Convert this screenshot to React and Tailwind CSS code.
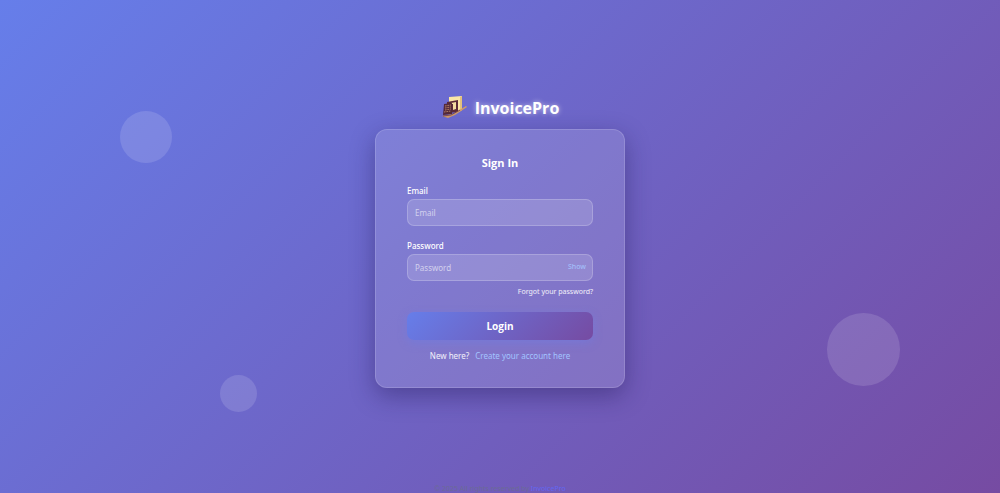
import { useState } from "react";

const inputClass =
  "h-[27px] w-full rounded-[7px] border border-white/20 bg-white/15 px-[7px] text-[8px] text-white placeholder-white/60 outline-none focus:border-white/60";

const Logo = () => (
  <svg viewBox="0 0 28 24" className="h-6 w-7" aria-hidden="true">
    <path d="M8 1 L21 0 L21 14 L18 16 L8 15Z" fill="#fbe6a6" />
    <path d="M19 1 L21 0 L21 14 L19 15Z" fill="#e3c27c" />
    <path d="M6 6 L17 4 L17 16 L6 17Z" fill="#5b2b38" />
    <path d="M10 7 L15 6 L15 13 L12 14 L12 8 L10 8Z" fill="#f3dca0" />
    <path d="M3 8 L11 7 L11 18 L2 19Z" fill="#54293a" />
    <path
      d="M4 10 L10 9 M4 12 L10 11 M4 14 L10 13 M3 16 L10 15"
      stroke="#c99469"
      strokeWidth="0.8"
      strokeDasharray="1.6 0.8"
    />
    <path d="M1 20 L12 18 L25 10 L26 11 L14 19 L7 22Z" fill="#cf9a68" />
    <path d="M2 20 L10 19 L19 14" stroke="#6b3a45" strokeWidth="0.8" fill="none" />
  </svg>
);

const Field = ({ id, label, children }) => (
  <div className="flex flex-col gap-[3px]">
    <label htmlFor={id} className="text-[8px] leading-[10px] font-medium">
      {label}
    </label>
    {children}
  </div>
);

const App = () => {
  const [email, setEmail] = useState("");
  const [password, setPassword] = useState("");
  const [showPassword, setShowPassword] = useState(false);

  const handleSubmit = (e) => {
    e.preventDefault();
  };

  return (
    <div className="relative flex h-screen flex-col overflow-hidden bg-linear-[135deg,#667eea_0%,#764ba2_100%] font-['Noto_Sans',sans-serif] text-white">
      {/* floating background circles */}
      <div className="absolute top-[22.5%] left-[12%] size-[52px] rounded-full bg-white/13" />
      <div className="absolute right-[10%] bottom-[21.7%] size-[73px] rounded-full bg-white/13" />
      <div className="absolute bottom-[16.5%] left-[22%] size-[37px] rounded-full bg-white/13" />

      <main className="relative flex flex-1 flex-col items-center justify-center">
        <div className="mb-2 flex items-center gap-[6px]">
          <Logo />
          <h1 className="font-['Open_Sans',sans-serif] text-[16px] leading-[26px] font-bold [text-shadow:0_0_5px_rgba(255,255,255,0.6)]">
            InvoicePro
          </h1>
        </div>

        <form
          onSubmit={handleSubmit}
          className="flex w-full max-w-[250px] flex-col rounded-xl border border-white/15 bg-white/13 px-[31px] py-[25px] shadow-[0_8px_24px_rgba(31,20,80,0.4)]"
        >
          <h2 className="mb-[15px] text-center font-['Open_Sans',sans-serif] text-[11px] leading-4 font-bold">
            Sign In
          </h2>

          <Field id="email" label="Email">
            <input
              id="email"
              type="email"
              placeholder="Email"
              value={email}
              onChange={(e) => setEmail(e.target.value)}
              className={inputClass}
            />
          </Field>

          <div className="mt-[15px]">
            <Field id="password" label="Password">
              <div className="relative flex">
                <input
                  id="password"
                  type={showPassword ? "text" : "password"}
                  placeholder="Password"
                  value={password}
                  onChange={(e) => setPassword(e.target.value)}
                  className={inputClass}
                />
                <button
                  type="button"
                  onClick={() => setShowPassword(!showPassword)}
                  className="absolute inset-y-0 right-[7px] cursor-pointer text-[7px] font-medium text-[#a3bffa]"
                >
                  {showPassword ? "Hide" : "Show"}
                </button>
              </div>
            </Field>
          </div>

          <a
            href="#forgot"
            className="mt-[6px] self-end text-[7px] leading-[10px] text-white/90 hover:underline"
          >
            Forgot your password?
          </a>

          <button
            type="submit"
            className="mt-[15px] h-7 cursor-pointer rounded-[7px] bg-linear-[135deg,#667eea_0%,#764ba2_100%] font-['Open_Sans',sans-serif] text-[10px] font-bold shadow-[0_3px_10px_rgba(102,126,234,0.4)]"
          >
            Login
          </button>

          <p className="mt-[10px] flex justify-center gap-[6px] text-[8px] leading-3 text-white/90">
            New here?
            <a href="#register" className="text-[#a3c4ff] hover:underline">
              Create your account here
            </a>
          </p>
        </form>
      </main>

      <footer className="relative h-[10px] text-center text-[7px] leading-3 text-[#6b6b96]">
        © 2025 All rights reserved by{" "}
        <a href="#home" className="text-[#6366f1]">
          InvoicePro
        </a>
      </footer>
    </div>
  );
};

export default App;
